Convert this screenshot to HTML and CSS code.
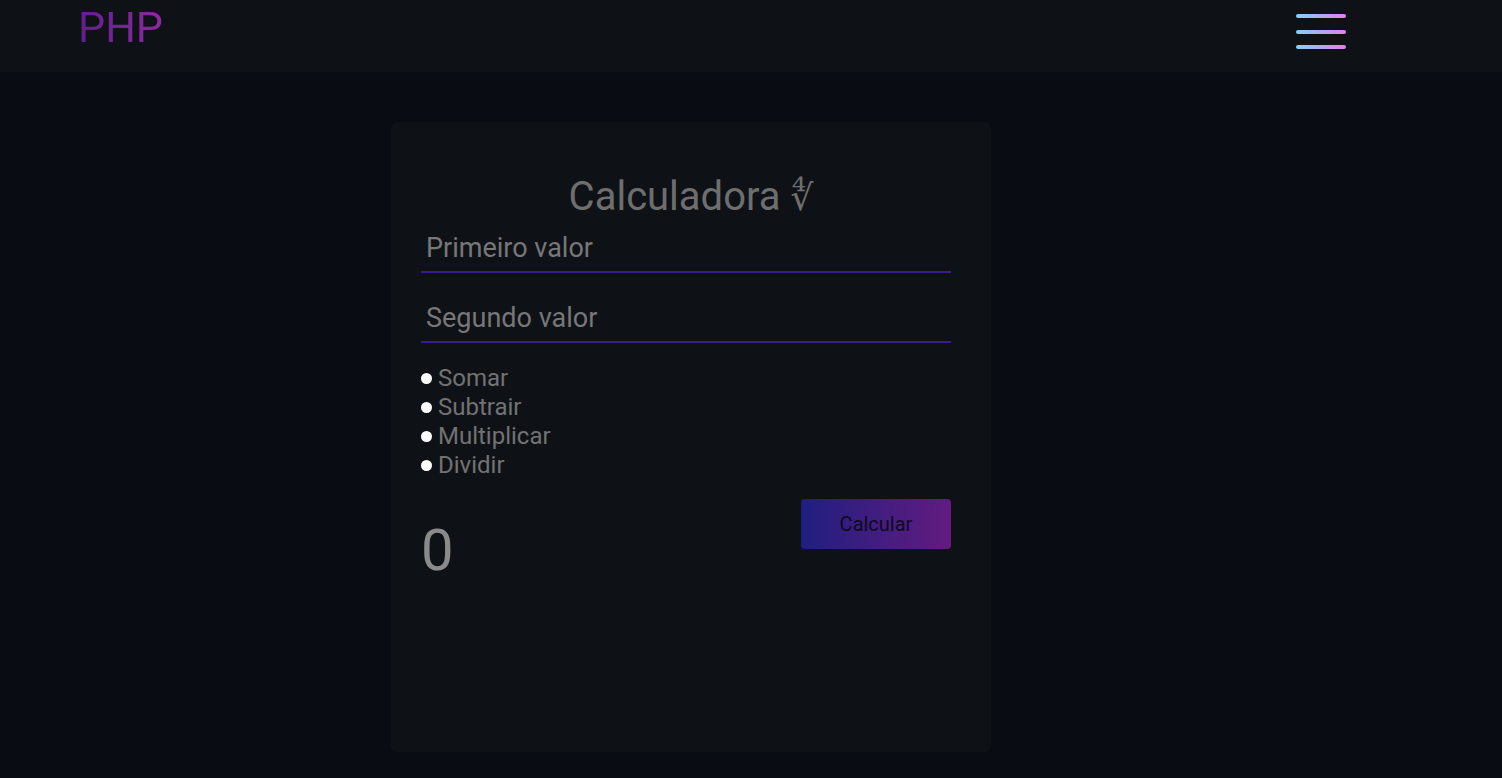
FILE: index.html
```html
<!DOCTYPE html>
<html lang="pt">
<head>
<meta charset="utf-8">
<title>PHP Calculadora</title>
<link rel="stylesheet" href="styles.css">
</head>
<body>
<header class="topbar">
  <span class="logo">PHP</span>
  <button class="menu" aria-label="menu">
    <svg width="52" height="40" viewBox="0 0 52 40">
      <defs>
        <linearGradient id="hg" x1="0" y1="0" x2="1" y2="0">
          <stop offset="0" stop-color="#7fd4fb"/>
          <stop offset="1" stop-color="#e27ef0"/>
        </linearGradient>
      </defs>
      <rect x="2" y="2" width="50" height="4" rx="2" fill="url(#hg)"/>
      <rect x="2" y="18" width="50" height="4" rx="2" fill="url(#hg)"/>
      <rect x="2" y="33" width="50" height="4" rx="2" fill="url(#hg)"/>
    </svg>
  </button>
</header>
<main class="page">
  <section class="card">
    <h1 class="title">Calculadora <span class="root">&#x221C;</span></h1>
    <form class="form">
      <input class="field" type="text" placeholder="Primeiro valor">
      <input class="field" type="text" placeholder="Segundo valor">
      <div class="ops">
        <label class="op"><span class="dot"></span>Somar</label>
        <label class="op"><span class="dot"></span>Subtrair</label>
        <label class="op"><span class="dot"></span>Multiplicar</label>
        <label class="op"><span class="dot"></span>Dividir</label>
      </div>
      <div class="bottom">
        <span class="result">0</span>
        <button class="calc" type="button">Calcular</button>
      </div>
    </form>
  </section>
</main>
</body>
</html>
```

FILE: styles.css
```css
* { box-sizing: border-box; }
html, body { margin: 0; padding: 0; }
body {
  background: #090c13;
  font-family: Roboto, "Liberation Sans", sans-serif;
  height: 778px;
  overflow: hidden;
}
.topbar {
  height: 72px;
  background: #0e1217;
  display: flex;
  align-items: flex-start;
  justify-content: space-between;
  padding: 0 156px 0 78px;
}
.logo {
  font-size: 43px;
  line-height: 54px;
  font-weight: 400;
  background: linear-gradient(90deg, #5e1f91, #8c2b9c);
  -webkit-background-clip: text;
  background-clip: text;
  color: transparent;
}
.menu {
  background: none;
  border: 0;
  padding: 0;
  margin-top: 12px;
  width: 52px;
  height: 40px;
  display: block;
}
.menu svg { display: block; }
.page {
  display: flex;
  justify-content: flex-start;
  padding: 50px 0 0 391px;
}
.card {
  width: 600px;
  height: 630px;
  background: #0e1217;
  border-radius: 6px;
  padding: 52px 40px 30px 30px;
}
.title {
  margin: 0 0 0 10px;
  text-align: center;
  font-size: 40px;
  font-weight: 400;
  line-height: 46px;
  color: #6e6e6e;
}
.root {
  font-family: "DejaVu Serif", "Liberation Serif", serif;
  font-size: 36px;
}
.form {
  display: flex;
  flex-direction: column;
}
.field {
  width: 530px;
  height: 45px;
  margin-top: 7px;
  background: transparent;
  border: 0;
  border-bottom: 2px solid #3a1d8c;
  color: #8a8a8a;
  font-family: Roboto, "Liberation Sans", sans-serif;
  font-size: 27px;
  padding: 0 0 4px 5px;
  outline: none;
}
.field + .field { margin-top: 25px; }
.field::placeholder { color: #777777; }
.ops {
  display: flex;
  flex-direction: column;
  margin-top: 20px;
}
.op {
  display: flex;
  align-items: center;
  height: 29px;
  font-size: 24px;
  color: #727272;
}
.dot {
  width: 11px;
  height: 11px;
  border-radius: 50%;
  background: #ffffff;
  margin: 2px 6px 0 0;
}
.bottom {
  display: flex;
  justify-content: space-between;
  align-items: flex-start;
  margin-top: 20px;
}
.result {
  margin-top: 17px;
  font-size: 58px;
  line-height: 68px;
  color: #8a8a8a;
}
.calc {
  width: 150px;
  height: 50px;
  border: 0;
  border-radius: 4px;
  background: linear-gradient(90deg, #1f1f7f, #631b80);
  color: #0d0a1c;
  font-family: Roboto, "Liberation Sans", sans-serif;
  font-size: 20px;
  cursor: pointer;
}
```
